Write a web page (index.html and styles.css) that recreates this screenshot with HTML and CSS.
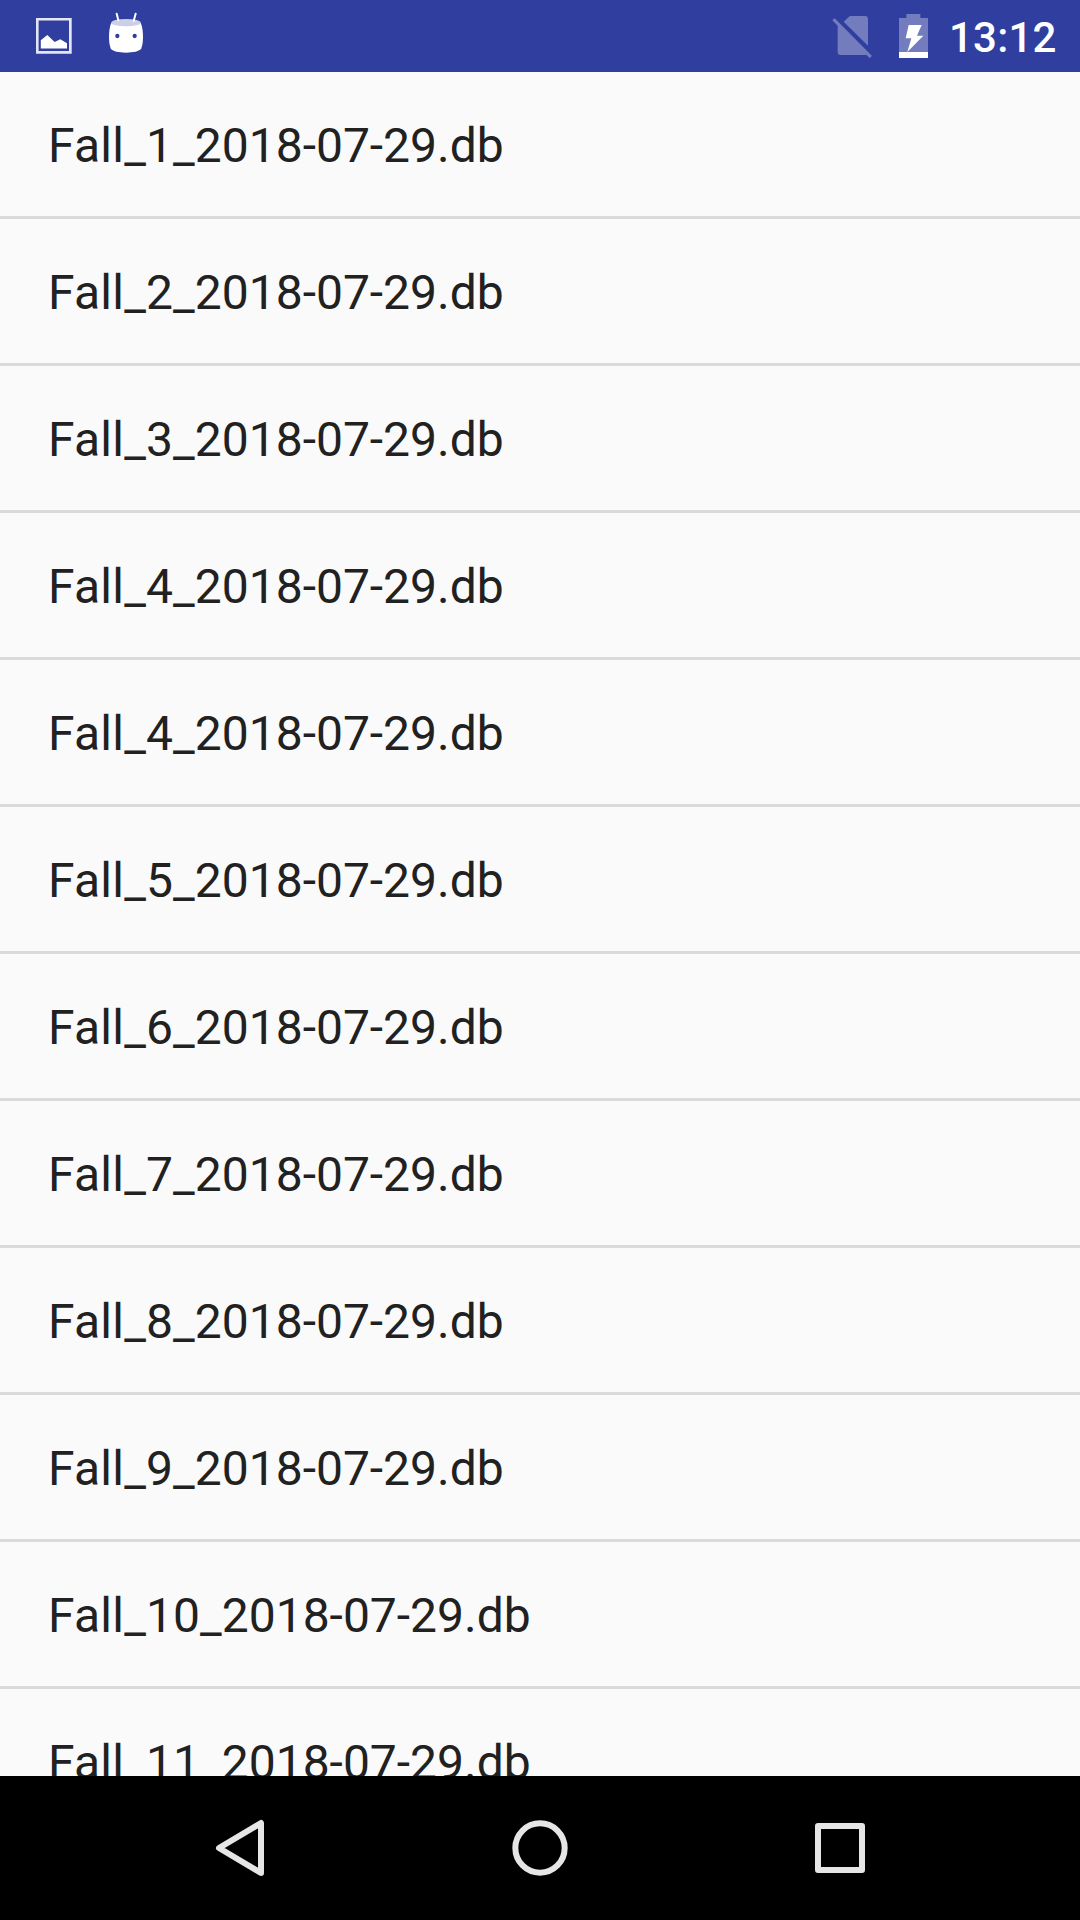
FILE: index.html
```html
<!DOCTYPE html>
<html lang="de">
<head>
<meta charset="utf-8">
<title>Fall</title>
<link rel="stylesheet" href="styles.css">
</head>
<body>
<div class="screen">
  <header class="status">
    <svg class="icon-image" viewBox="0 0 36 36"><path fill="#e4e6f6" fill-rule="evenodd" d="M0 0H35.7V35.7H0ZM2.6 2.6V33H33V2.6Z"/><path fill="#fff" d="M4.8 30.4V22.3L11.3 17L18.7 24L24.3 21.3L31 25.3V30.4Z"/></svg>
    <svg class="icon-droid" viewBox="0 0 102 123">
      <path fill="#fff" d="M7 32C2 42 0 60 0 75C0 90 2 100 5 109C10 119 30 122 51 122C72 122 92 119 97 109C100 100 102 90 102 75C102 60 100 42 95 32Z"/>
      <ellipse cx="51" cy="32" rx="44" ry="11" fill="#cbcfe7"/>
      <path d="M23 5L28 25M80 5L74 27" stroke="#fff" stroke-width="6" stroke-linecap="round"/>
      <circle cx="25" cy="72" r="6.5" fill="#303f9f"/><circle cx="77" cy="72" r="6.5" fill="#303f9f"/>
    </svg>
    <span class="gap"></span>
    <svg class="icon-sim" viewBox="36 48 120 126"><g fill="#fff" opacity=".32"><path d="M71 65L87 50Q89 48 92 48H135Q144 48 144 57V137Z"/><path d="M37 61L44 55L156 168L149 174L139 164Q137 165 134 165H62Q53 165 53 156V77Z"/></g></svg>
    <svg class="icon-battery" viewBox="237 42 87 132"><path fill="#fff" opacity=".32" d="M259 42H301V54H324V156H237V54H259Z"/><path fill="#fff" d="M237 156H324V174H237ZM266 75H305L291 107H310L262 156L274 115H257Z"/></svg>
    <time class="clock">13:12</time>
  </header>
  <ul class="list">
    <li class="row"><span class="prefix">Fall_</span>1_2018-07-29.db</li>
    <li class="row"><span class="prefix">Fall_</span>2_2018-07-29.db</li>
    <li class="row"><span class="prefix">Fall_</span>3_2018-07-29.db</li>
    <li class="row"><span class="prefix">Fall_</span>4_2018-07-29.db</li>
    <li class="row"><span class="prefix">Fall_</span>4_2018-07-29.db</li>
    <li class="row"><span class="prefix">Fall_</span>5_2018-07-29.db</li>
    <li class="row"><span class="prefix">Fall_</span>6_2018-07-29.db</li>
    <li class="row"><span class="prefix">Fall_</span>7_2018-07-29.db</li>
    <li class="row"><span class="prefix">Fall_</span>8_2018-07-29.db</li>
    <li class="row"><span class="prefix">Fall_</span>9_2018-07-29.db</li>
    <li class="row"><span class="prefix">Fall_</span>10_2018-07-29.db</li>
    <li class="row"><span class="prefix">Fall_</span>11_2018-07-29.db</li>
  </ul>
  <nav class="nav">
    <svg class="nav-icon" viewBox="0 24 240 240"><path d="M57 144L183 69V219Z"/></svg>
    <svg class="nav-icon" viewBox="0 24 240 240"><circle cx="120" cy="144" r="74"/></svg>
    <svg class="nav-icon" viewBox="0 24 240 240"><path d="M54 78H186V210H54Z"/></svg>
  </nav>
</div>
</body>
</html>
```
FILE: styles.css
```css
body { margin: 0; font-family: Roboto, sans-serif; }
.screen { width: 1080px; height: 1920px; display: flex; flex-direction: column; overflow: hidden; background: #fafafa; }
.status { flex: none; height: 72px; box-sizing: border-box; padding: 0 24px 0 36px; display: flex; align-items: flex-start; background: #303f9f; color: #fff; }
.icon-image { width: 36px; height: 36px; margin-top: 18px; }
.icon-droid { width: 34px; height: 41px; margin: 12px 0 0 37px; }
.gap { flex: 1; }
.icon-sim { width: 40px; height: 42px; margin: 16px 27px 0 0; }
.icon-battery { width: 29px; height: 44px; margin: 14px 0 0; }
.clock { width: 107px; margin-left: 21px; font-size: 42px; font-weight: 500; line-height: 76px; letter-spacing: 0.2px; text-align: right; }
.list { flex: 1; min-height: 0; overflow: hidden; margin: 0; padding: 0; list-style: none; }
.row { height: 147px; box-sizing: border-box; padding: 2px 0 0 48px; border-bottom: 3px solid #dadada; font-size: 48px; line-height: 144px; color: #212121; }
.prefix { letter-spacing: 0.25px; }
.nav { flex: none; height: 144px; display: flex; justify-content: center; align-items: center; gap: 220px; background: #000; }
.nav-icon { width: 80px; height: 80px; fill: none; stroke: #e6e6e6; stroke-width: 18px; stroke-linejoin: round; }
```
